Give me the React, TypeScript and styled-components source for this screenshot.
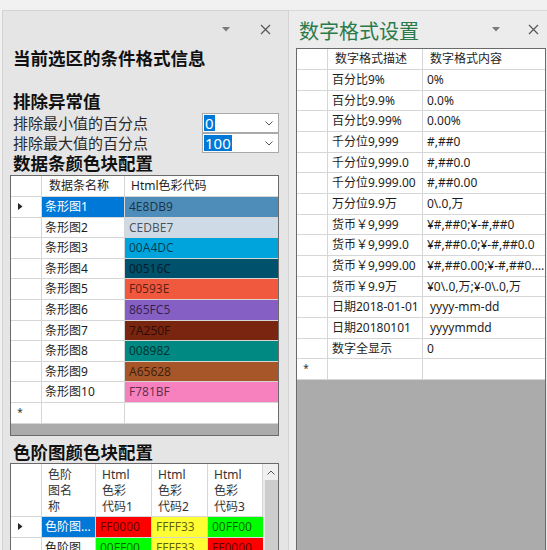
import React from 'react'
import styled, { createGlobalStyle } from 'styled-components'

const GlobalStyle = createGlobalStyle`
  html, body {
    margin: 0;
    padding: 0;
    background: #f1f1f1;
  }
  body {
    font-family: "Noto Sans", "Noto Sans CJK SC", sans-serif;
    color: #1e1e1e;
  }
  * {
    box-sizing: border-box;
  }
`

const Page = styled.div`
  display: flex;
  width: 547px;
  height: 550px;
  padding-top: 10px;
  overflow: hidden;
`

const LeftPanel = styled.div`
  display: flex;
  flex-direction: column;
  width: 287px;
  margin-left: 2px;
  background: #e5e5e5;
  border: 1px solid #d3d3d3;
  border-bottom: none;
`

const RightPanel = styled.div`
  display: flex;
  flex-direction: column;
  flex: 1;
  background: #ececec;
  border-top: 1px solid #d8d8d8;
  min-width: 0;
`

const PaneHeader = styled.div<{ $padRight: number; $gap: number }>`
  display: flex;
  align-items: center;
  justify-content: flex-end;
  gap: ${(p) => p.$gap}px;
  height: 37px;
  padding-right: ${(p) => p.$padRight}px;
  flex-shrink: 0;
`

const PaneTitle = styled.div`
  margin-right: auto;
  padding-left: 10px;
  padding-top: 5px;
  font-size: 20px;
  line-height: 26px;
  color: #2b7a4b;
`

const Body = styled.div`
  display: flex;
  flex-direction: column;
  padding-left: 10px;
  flex: 1;
  min-height: 0;
`

const Heading = styled.div<{ $top?: number }>`
  font-size: 17.5px;
  font-weight: 700;
  line-height: 20px;
  height: 20px;
  margin-top: ${(p) => p.$top ?? 0}px;
  color: #111;
  white-space: nowrap;
`

const OptionRow = styled.div<{ $top?: number }>`
  display: flex;
  align-items: center;
  justify-content: space-between;
  height: 20px;
  margin-top: ${(p) => p.$top ?? 0}px;
  padding-right: 9px;
`

const OptionLabel = styled.div`
  font-size: 15px;
  line-height: 20px;
  color: #2a2a2a;
`

const Combo = styled.div`
  display: flex;
  align-items: center;
  justify-content: space-between;
  width: 77px;
  height: 20px;
  background: #fff;
  border: 1px solid #a9a9a9;
  padding: 0 5px 0 1px;
`

const ComboValue = styled.span`
  background: #0078d7;
  color: #fff;
  font-size: 15px;
  line-height: 16px;
  padding: 0 1px;
`

const GridBox = styled.div<{ $top?: number }>`
  display: flex;
  flex-direction: column;
  margin-top: ${(p) => p.$top ?? 0}px;
  margin-left: -3px;
  margin-right: 9px;
  border: 1px solid #6a6a6a;
  background: #ababab;
`

const GridFoot = styled.div`
  height: 11px;
`

const GridRow = styled.div<{ $cols: string; $h: number }>`
  display: grid;
  grid-template-columns: ${(p) => p.$cols};
  height: ${(p) => p.$h}px;
  line-height: ${(p) => p.$h - 1}px;
`

const Cell = styled.div<{ $bg?: string; $fg?: string; $pad?: number }>`
  background: ${(p) => p.$bg ?? '#fff'};
  color: ${(p) => p.$fg ?? '#1e1e1e'};
  border-right: 1px solid #d6d6d6;
  border-bottom: 1px solid #d6d6d6;
  padding-left: ${(p) => p.$pad ?? 4}px;
  font-size: 12px;
  white-space: nowrap;
  overflow: hidden;
  text-overflow: ellipsis;

  &:last-child {
    border-right: none;
  }
`

const RowHead = styled.div`
  display: flex;
  align-items: center;
  justify-content: center;
  background: #fff;
  border-right: 1px solid #d6d6d6;
  border-bottom: 1px solid #d6d6d6;
  padding-right: 12px;
  font-size: 10px;
  color: #333;
`

const HeadCell = styled.div<{ $pad?: number }>`
  background: #fff;
  border-right: 1px solid #d6d6d6;
  border-bottom: 1px solid #d6d6d6;
  padding-left: ${(p) => p.$pad ?? 6}px;
  padding-top: 3px;
  font-size: 12px;
  line-height: 16px;
  color: #333;
  white-space: nowrap;
  overflow: hidden;
`

const ScaleGrid = styled.div`
  display: flex;
  margin-top: 1.5px;
  margin-left: -3px;
  margin-right: 9px;
  border: 1px solid #6a6a6a;
  border-bottom: none;
  flex: 1;
  background: #fff;
`

const ScaleTable = styled.div`
  flex: 1;
`

const ScrollBar = styled.div`
  display: flex;
  flex-direction: column;
  width: 15px;
  background: #eaeaea;
`

const ScrollButton = styled.div`
  display: flex;
  align-items: center;
  justify-content: center;
  height: 16px;
  background: #f0f0f0;
`

const ScrollThumb = styled.div`
  flex: 1;
  margin-left: 2px;
  background: #cdcdcd;
`

const RightGrid = styled.div`
  display: flex;
  flex-direction: column;
  flex: 1;
  margin-left: 7px;
  margin-right: 1px;
  border: 1px solid #6a6a6a;
  border-bottom: none;
  background: #ababab;
`

const DropArrow = () => (
  <svg width='8' height='5' viewBox='0 0 8 5'>
    <path d='M0 0H8L4 4.5Z' fill='#7a7a7a' />
  </svg>
)

const CloseIcon = () => (
  <svg width='11' height='11' viewBox='0 0 11 11'>
    <path d='M1 1L10 10M10 1L1 10' stroke='#5a5a5a' strokeWidth='1.3' />
  </svg>
)

const Chevron = ({ up }: { up?: boolean }) => (
  <svg width='8' height='5' viewBox='0 0 8 5'>
    <path d={up ? 'M0.5 4.5L4 1L7.5 4.5' : 'M0.5 0.5L4 4L7.5 0.5'} stroke='#555' strokeWidth='1' fill='none' />
  </svg>
)

const CurrentMark = () => (
  <svg width='5' height='7' viewBox='0 0 5 7'>
    <path d='M0 0L4.5 3.5L0 7Z' fill='#222' />
  </svg>
)

const SELECTED = '#0078d7'
const DIM = 'rgba(0,0,0,0.64)'

const bars = [
  '4E8DB9',
  'CEDBE7',
  '00A4DC',
  '00516C',
  'F0593E',
  '865FC5',
  '7A250F',
  '008982',
  'A65628',
  'F781BF',
]

// names are shown clipped by the narrow column, as the grid draws them
const scales = [
  { name: '色阶图...', colors: ['FF0000', 'FFFF33', '00FF00'] },
  { name: '色阶图...', colors: ['00FF00', 'FFFF33', 'FF0000'] },
]

const formats: [string, string, number?][] = [
  ['百分比9%', '0%'],
  ['百分比9.9%', '0.0%'],
  ['百分比9.99%', '0.00%'],
  ['千分位9,999', '#,##0'],
  ['千分位9,999.0', '#,##0.0'],
  ['千分位9.999.00', '#,##0.00'],
  ['万分位9.9万', '0\\.0,万'],
  ['货币￥9,999', '¥#,##0;¥-#,##0'],
  ['货币￥9,999.0', '¥#,##0.0;¥-#,##0.0'],
  ['货币￥9,999.00', '¥#,##0.00;¥-#,##0.00'],
  ['货币￥9.9万', '¥0\\.0,万;¥-0\\.0,万'],
  ['日期2018-01-01', 'yyyy-mm-dd', 7],
  ['日期20180101', 'yyyymmdd', 7],
  ['数字全显示', '0'],
]

const BAR_COLS = '31px 83px 1fr'
const SCALE_COLS = '31px 54px 56px 56px 1fr'
const FORMAT_COLS = '31px 95px 1fr'
const ROW_H = 20.6

export default function App() {
  return (
    <>
      <GlobalStyle />
      <Page>
        <LeftPanel>
          <PaneHeader $padRight={17} $gap={30}>
            <DropArrow />
            <CloseIcon />
          </PaneHeader>
          <Body>
            <Heading>当前选区的条件格式信息</Heading>
            <Heading $top={23}>排除异常值</Heading>
            <OptionRow $top={2}>
              <OptionLabel>排除最小值的百分点</OptionLabel>
              <Combo>
                <ComboValue>0</ComboValue>
                <Chevron />
              </Combo>
            </OptionRow>
            <OptionRow>
              <OptionLabel>排除最大值的百分点</OptionLabel>
              <Combo>
                <ComboValue>100</ComboValue>
                <Chevron />
              </Combo>
            </OptionRow>
            <Heading>数据条颜色块配置</Heading>

            <GridBox $top={2}>
              <GridRow $cols={BAR_COLS} $h={21}>
                <RowHead />
                <Cell $pad={7}>数据条名称</Cell>
                <Cell $pad={6}>Html色彩代码</Cell>
              </GridRow>
              {bars.map((hex, i) => (
                <GridRow key={hex} $cols={BAR_COLS} $h={ROW_H}>
                  <RowHead>{i === 0 ? <CurrentMark /> : null}</RowHead>
                  <Cell $pad={3} $bg={i === 0 ? SELECTED : '#fff'} $fg={i === 0 ? '#fff' : undefined}>
                    条形图{i + 1}
                  </Cell>
                  <Cell $bg={'#' + hex} $fg={DIM}>
                    {hex}
                  </Cell>
                </GridRow>
              ))}
              <GridRow $cols={BAR_COLS} $h={ROW_H}>
                <RowHead>*</RowHead>
                <Cell />
                <Cell />
              </GridRow>
              <GridFoot />
            </GridBox>

            <Heading $top={6}>色阶图颜色块配置</Heading>

            <ScaleGrid>
              <ScaleTable>
                <GridRow $cols={SCALE_COLS} $h={53}>
                  <RowHead />
                  <HeadCell>
                    色阶
                    <br />
                    图名
                    <br />称
                  </HeadCell>
                  {[1, 2, 3].map((n) => (
                    <HeadCell key={n}>
                      Html
                      <br />
                      色彩
                      <br />
                      代码{n}
                    </HeadCell>
                  ))}
                </GridRow>
                {scales.map((s, i) => (
                  <GridRow key={i} $cols={SCALE_COLS} $h={ROW_H}>
                    <RowHead>{i === 0 ? <CurrentMark /> : null}</RowHead>
                    <Cell $pad={3} $bg={i === 0 ? SELECTED : '#fff'} $fg={i === 0 ? '#fff' : undefined}>
                      {s.name}
                    </Cell>
                    {s.colors.map((c, j) => (
                      <Cell key={j} $bg={'#' + c} $fg={DIM}>
                        {c}
                      </Cell>
                    ))}
                  </GridRow>
                ))}
              </ScaleTable>
              <ScrollBar>
                <ScrollButton>
                  <Chevron up />
                </ScrollButton>
                <ScrollThumb />
              </ScrollBar>
            </ScaleGrid>
          </Body>
        </LeftPanel>

        <RightPanel>
          <PaneHeader $padRight={8} $gap={28}>
            <PaneTitle>数字格式设置</PaneTitle>
            <DropArrow />
            <CloseIcon />
          </PaneHeader>
          <RightGrid>
            <GridRow $cols={FORMAT_COLS} $h={21}>
              <RowHead />
              <Cell $pad={7}>数字格式描述</Cell>
              <Cell $pad={7}>数字格式内容</Cell>
            </GridRow>
            {formats.map(([desc, fmt, pad]) => (
              <GridRow key={desc} $cols={FORMAT_COLS} $h={20.67}>
                <RowHead />
                <Cell>{desc}</Cell>
                <Cell $pad={pad}>{fmt}</Cell>
              </GridRow>
            ))}
            <GridRow $cols={FORMAT_COLS} $h={20.67}>
              <RowHead>*</RowHead>
              <Cell />
              <Cell />
            </GridRow>
          </RightGrid>
        </RightPanel>
      </Page>
    </>
  )
}
